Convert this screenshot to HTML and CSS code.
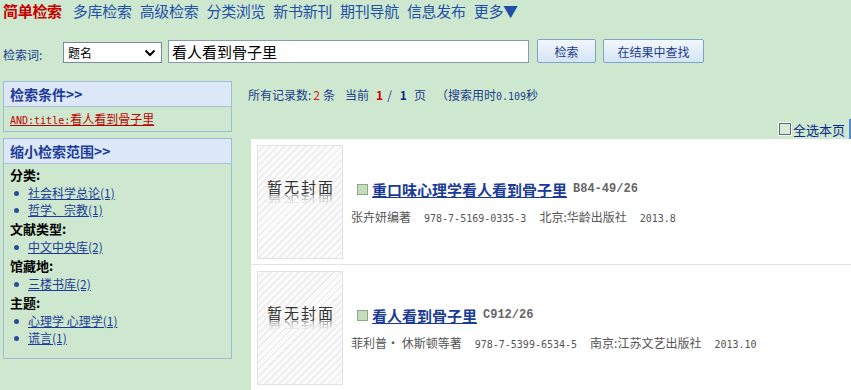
FILE: index.html
```html
<!DOCTYPE html>
<html lang="zh-CN">
<head>
<meta charset="utf-8">
<title>简单检索</title>
<link rel="stylesheet" href="styles.css">
</head>
<body>
<nav class="nav">
  <a class="nav-item active">简单检索</a>
  <a class="nav-item">多库检索</a>
  <a class="nav-item">高级检索</a>
  <a class="nav-item">分类浏览</a>
  <a class="nav-item">新书新刊</a>
  <a class="nav-item">期刊导航</a>
  <a class="nav-item">信息发布</a>
  <a class="nav-item">更多▼</a>
</nav>

<form class="search">
  <label class="search-label">检索词:</label>
  <div class="select"><span>题名</span><svg width="12" height="10" viewBox="0 0 12 10"><path d="M1.5 2.5 L6 7 L10.5 2.5" fill="none" stroke="#000" stroke-width="2"/></svg></div>
  <div class="input">看人看到骨子里</div>
  <button type="button" class="btn btn-search">检索</button>
  <button type="button" class="btn btn-within">在结果中查找</button>
</form>

<div class="main">
  <aside class="side">
    <section class="panel">
      <h3 class="panel-head">检索条件&gt;&gt;</h3>
      <div class="panel-body cond"><a class="cond-link"><span class="mono">AND:title:</span>看人看到骨子里</a></div>
    </section>
    <section class="panel panel-narrow">
      <h3 class="panel-head">缩小检索范围&gt;&gt;</h3>
      <div class="panel-body facets">
        <div class="facet-title">分类:</div>
        <ul class="facet-list">
          <li><a>社会科学总论(1)</a></li>
          <li><a>哲学、宗教(1)</a></li>
        </ul>
        <div class="facet-title">文献类型:</div>
        <ul class="facet-list">
          <li><a>中文中央库(2)</a></li>
        </ul>
        <div class="facet-title">馆藏地:</div>
        <ul class="facet-list">
          <li><a>三楼书库(2)</a></li>
        </ul>
        <div class="facet-title">主题:</div>
        <ul class="facet-list">
          <li><a>心理学 心理学(1)</a></li>
          <li><a>谎言(1)</a></li>
        </ul>
      </div>
    </section>
  </aside>

  <section class="results">
    <div class="summary"><span>所有记录数:</span><span class="red s-num">2</span><span class="s-tiao">条</span><span class="s-cur">当前</span><b class="red s-p1">1</b><span class="s-slash">/</span><b class="navy s-p2">1</b><span class="s-ye">页</span><span class="s-time">（搜索用时<span class="mono">0.109</span>秒</span></div>
    <div class="toolbar"><label class="select-all"><span class="box"></span>全选本页</label></div>
    <div class="list">
      <div class="item">
        <div class="cover"><span class="cover-text" data-r="暂无封面">暂无封面</span></div>
        <div class="info">
          <div class="title-row"><span class="mark"></span><a class="title">重口味心理学看人看到骨子里</a><span class="callno">B84-49/26</span></div>
          <div class="meta"><span>张卉妍编著</span><span class="mono">978-7-5169-0335-3</span><span>北京:华龄出版社</span><span class="mono">2013.8</span></div>
        </div>
      </div>
      <div class="item">
        <div class="cover"><span class="cover-text" data-r="暂无封面">暂无封面</span></div>
        <div class="info">
          <div class="title-row"><span class="mark"></span><a class="title">看人看到骨子里</a><span class="callno">C912/26</span></div>
          <div class="meta"><span>菲利普· 休斯顿等著</span><span class="mono">978-7-5399-6534-5</span><span>南京:江苏文艺出版社</span><span class="mono">2013.10</span></div>
        </div>
      </div>
    </div>
  </section>
</div>
</body>
</html>
```

FILE: styles.css
```css
* { box-sizing: border-box; }
html, body { margin: 0; padding: 0; }
body {
  background: #cde8cf;
  font-family: "Noto Sans CJK SC", "DejaVu Sans", sans-serif;
  font-size: 12px;
  color: #1c3c8c;
  width: 851px;
  height: 390px;
  overflow: hidden;
}
a { cursor: pointer; }
.mono { font-family: "DejaVu Sans Mono", "Liberation Mono", monospace; font-size: 10px; }

.nav {
  display: flex;
  gap: 8px;
  padding-left: 3px;
  height: 22px;
  align-items: center;
}
.nav-item {
  font-size: 15px;
  line-height: 22px;
  color: #1f50a8;
  letter-spacing: -0.3px;
}
.nav-item.active { color: #c80000; font-weight: bold; margin-right: 3px; }

.search {
  display: flex;
  align-items: center;
  height: 26px;
  margin-top: 16px;
  padding-left: 3px;
}
.search-label { color: #1c3c8c; font-size: 12px; width: 60px; padding-top: 6px; }
.select {
  width: 99px; height: 21px;
  border: 1px solid #7a8a9a;
  background: #fff;
  display: flex; align-items: center; justify-content: space-between;
  padding: 0 5px 0 4px;
  font-size: 12px; color: #000;
  margin-top: 3px;
}
.input {
  margin-left: 6px;
  width: 361px; height: 23px;
  border: 1px solid #8a9aa8;
  background: #fff;
  font-size: 15px; color: #000;
  line-height: 21px;
  padding-left: 3px;
}
.btn {
  height: 24px;
  border: 1px solid #7ea4cc;
  border-radius: 2px;
  background: linear-gradient(#f2f7fc, #d5e4f4);
  color: #1c3c8c;
  font-family: inherit;
  font-size: 12px;
  padding: 0;
  margin-left: 8px;
}
.btn-search { width: 59px; }
.btn-within { width: 101px; margin-left: 7px; }

.main {
  display: flex;
  margin-top: 17px;
}
.side { width: 229px; margin-left: 3px; }
.panel {
  border: 1px solid #9fbcd6;
  margin-bottom: 6px;
}
.panel-head {
  margin: 0;
  height: 25px;
  background: #dce8f8;
  border-bottom: 1px solid #a8c2da;
  color: #1c3c98;
  font-size: 14px;
  font-weight: bold;
  line-height: 24px;
  padding-left: 6px;
}
.cond { height: 24px; padding-left: 6px; line-height: 24px; }
.cond-link { color: #c00000; text-decoration: underline; font-size: 12px; }
.cond-link .mono { font-size: 10px; }
.facets { padding: 2px 0 10px 6px; }
.facet-title { color: #000; font-weight: bold; font-size: 13px; line-height: 18px; }
.facet-list { margin: 0 0 2px 0; padding: 0 0 0 18px; list-style: none; }
.facet-list li { position: relative; line-height: 17px; }
.facet-list li::before {
  content: ""; position: absolute; left: -14px; top: 7px;
  width: 5px; height: 5px; border-radius: 50%; background: #2a4c9c;
}
.facet-list a { color: #1c3c98; text-decoration: underline; font-size: 12px; }

.results { flex: 1; margin-left: 16px; display: flex; flex-direction: column; }
.summary {
  display: flex; align-items: baseline;
  color: #1c3c8c; font-size: 12px; line-height: 16px; margin-top: 6px;
}
.summary .s-num { margin-left: 2px; }
.summary .s-tiao { margin-left: 3px; }
.summary .s-cur { margin-left: 10px; }
.summary .s-p1 { margin-left: 7px; }
.summary .s-slash { margin-left: 4px; }
.summary .s-p2 { margin-left: 8px; }
.summary .s-ye { margin-left: 7px; }
.summary .s-time { margin-left: 10px; }
.summary .red { color: #d02020; }
.summary b.red { color: #d00000; }
.summary .navy { color: #0a2a8a; }
.summary .mono { font-size: 10px; }
.toolbar {
  display: flex; justify-content: flex-end;
  height: 20px;
  margin-top: 14px;
  border-right: 2px solid #5a8ad0;
  padding-right: 4px;
}
.select-all { display: flex; align-items: center; font-size: 13px; color: #0a2a8a; }
.select-all .box {
  width: 12px; height: 12px; border: 1px solid #667; background: #d6ecd8;
  outline: 1px solid #f4fbf4; margin-right: 2px;
}
.list {
  background: #fff;
  margin-left: 3px;
  margin-top: 0;
  border-bottom: 2px solid #b8c8dc;
}
.item {
  display: flex;
  padding: 6px;
  border-bottom: 1px solid #e2e2e2;
  height: 126px;
}
.item:last-child { border-bottom: none; height: 126px; }
.cover {
  width: 86px; height: 114px;
  border: 1px solid #e2e2e2;
  background: repeating-linear-gradient(135deg, #fbfbfb 0 3px, #efefef 3px 5px);
  display: flex; flex-direction: column; align-items: center;
  padding-top: 32px;
}
.cover-text {
  position: relative;
  font-size: 15px; color: #333; letter-spacing: 2px; line-height: 18px; padding-left: 2px;
}
.cover-text::after {
  content: attr(data-r);
  position: absolute; left: 2px; top: 15px;
  height: 18px;
  color: #777;
  transform: scaleY(-1);
  -webkit-mask-image: linear-gradient(to top, rgba(0,0,0,0.9) 0%, rgba(0,0,0,0) 60%);
  mask-image: linear-gradient(to top, rgba(0,0,0,0.9) 0%, rgba(0,0,0,0) 60%);
  pointer-events: none;
}
.info { margin-left: 8px; padding-top: 33px; }
.title-row { display: flex; align-items: center; height: 22px; margin-left: 6px; }
.mark { width: 11px; height: 11px; background: #c4deba; border: 1px solid #8aa88a; margin-right: 4px; }
.title { color: #1a3a9a; font-size: 15px; font-weight: bold; text-decoration: underline; }
.callno { margin-left: 6px; font-family: "Liberation Mono", monospace; font-weight: bold; font-size: 12px; color: #666; }
.meta { display: flex; gap: 13px; margin-top: 9px; color: #555; font-size: 12px; line-height: 16px; align-items: baseline; }
```
